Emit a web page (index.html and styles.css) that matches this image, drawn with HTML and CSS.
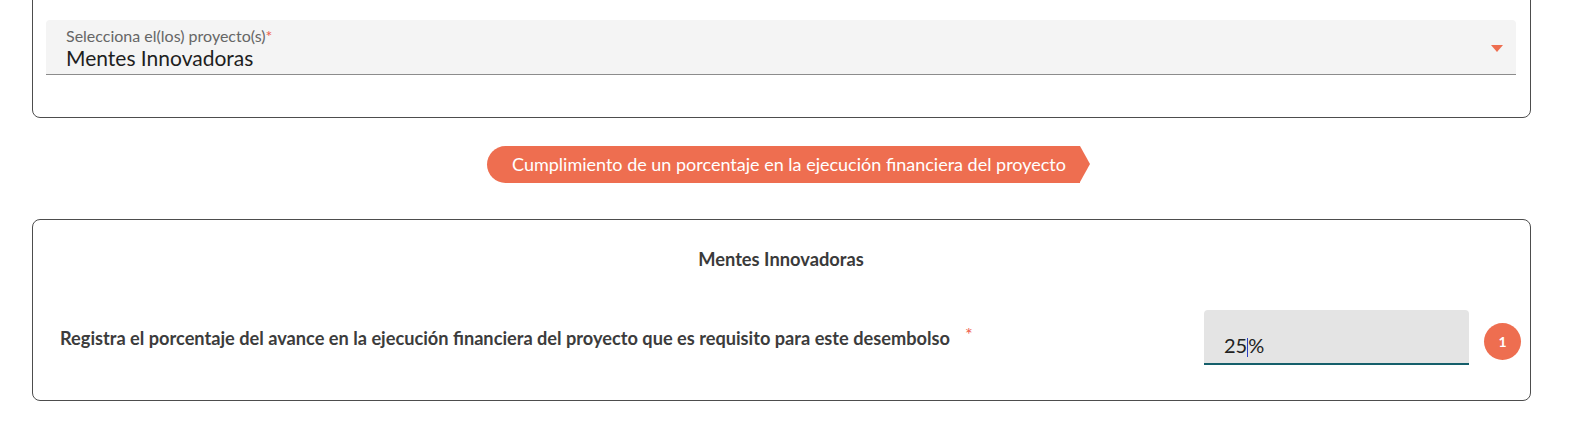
FILE: index.html
```html
<!DOCTYPE html>
<html lang="es">
<head>
    <meta charset="UTF-8">
    <meta name="viewport" content="width=device-width, initial-scale=1.0">
    <title>Desembolso</title>
    <link rel="stylesheet" href="styles.css">
</head>
<body>
    <div class="page">
        <div class="card card-top">
            <div class="select-field">
                <div class="select-text">
                    <span class="select-label">Selecciona el(los) proyecto(s)<span class="req">*</span></span>
                    <span class="select-value">Mentes Innovadoras</span>
                </div>
                <span class="select-arrow"></span>
            </div>
        </div>

        <div class="banner-row">
            <div class="banner">Cumplimiento de un porcentaje en la ejecución financiera del proyecto</div>
        </div>

        <div class="card card-project">
            <h2 class="project-title">Mentes Innovadoras</h2>
            <div class="field-row">
                <div class="field-label">
                    Registra el porcentaje del avance en la ejecución financiera del proyecto que es requisito para este desembolso<span class="req req-big">*</span>
                </div>
                <div class="percent-input">25<span class="caret"></span>%</div>
                <span class="badge">1</span>
            </div>
        </div>
    </div>
</body>
</html>
```

FILE: styles.css
```css
body {
    font-family: Lato, 'Open Sans', sans-serif;
    background-color: #fff;
    margin: 0;
    padding: 0;
    color: #3a3a3a;
    overflow: hidden;
}
.page {
    padding: 0 53px 0 32px;
}
.card {
    border: 1px solid #4d4d4d;
    border-radius: 8px;
    background: #fff;
}
.card-top {
    margin-top: -20px;
    padding: 39px 14px 42px 13px;
}
.select-field {
    display: flex;
    height: 54px;
    background: #f4f4f4;
    border-bottom: 1px solid #8c8c8c;
    border-radius: 4px 4px 0 0;
    padding: 0 13px 0 20px;
}
.select-text {
    flex: 1;
    display: flex;
    flex-direction: column;
    padding-top: 6px;
}
.select-label {
    font-size: 16px;
    line-height: 19px;
    color: #666;
}
.req {
    color: #ee5b4b;
}
.select-value {
    font-size: 21px;
    line-height: 26px;
    color: #1e1e1e;
}
.select-arrow {
    align-self: center;
    width: 0;
    height: 0;
    border-left: 6px solid transparent;
    border-right: 6px solid transparent;
    border-top: 7px solid #ee6e50;
    margin-top: 2px;
}
.banner-row {
    display: flex;
    justify-content: center;
    padding: 28px 0 36px 4px;
}
.banner {
    position: relative;
    height: 37px;
    line-height: 37px;
    background: #ee6e50;
    color: #fff;
    font-size: 18px;
    padding: 0 14px 0 25px;
    border-radius: 19px 0 0 19px;
}
.banner::after {
    content: "";
    position: absolute;
    top: 0;
    right: -10px;
    border-top: 18.5px solid transparent;
    border-bottom: 18.5px solid transparent;
    border-left: 10px solid #ee6e50;
}
.card-project {
    padding: 28px 9px 35px 27px;
}
.project-title {
    margin: 0 19px 40px 0;
    text-align: center;
    font-size: 18.3px;
    font-weight: 700;
    line-height: 22px;
    color: #3a3a3a;
}
.field-row {
    display: flex;
    align-items: center;
}
.field-label {
    flex: 1;
    font-size: 18.2px;
    font-weight: 700;
    color: #3c3c3c;
}
.req-big {
    font-weight: 400;
    margin-left: 15px;
    position: relative;
    top: -4px;
}
.percent-input {
    width: 245px;
    height: 47px;
    padding: 0 0 6px 20px;
    background: #e4e4e4;
    border-bottom: 2px solid #155f6b;
    border-radius: 4px 4px 0 0;
    font-size: 20px;
    line-height: 24px;
    color: #222;
    display: flex;
    align-items: flex-end;
}
.caret {
    width: 1px;
    height: 19px;
    background: #2b3fc4;
}
.badge {
    width: 37px;
    height: 37px;
    border-radius: 50%;
    background: #ee6e50;
    color: #fff;
    font-size: 14px;
    font-weight: 700;
    display: flex;
    align-items: center;
    justify-content: center;
    margin: 8px 0 0 15px;
}
```
